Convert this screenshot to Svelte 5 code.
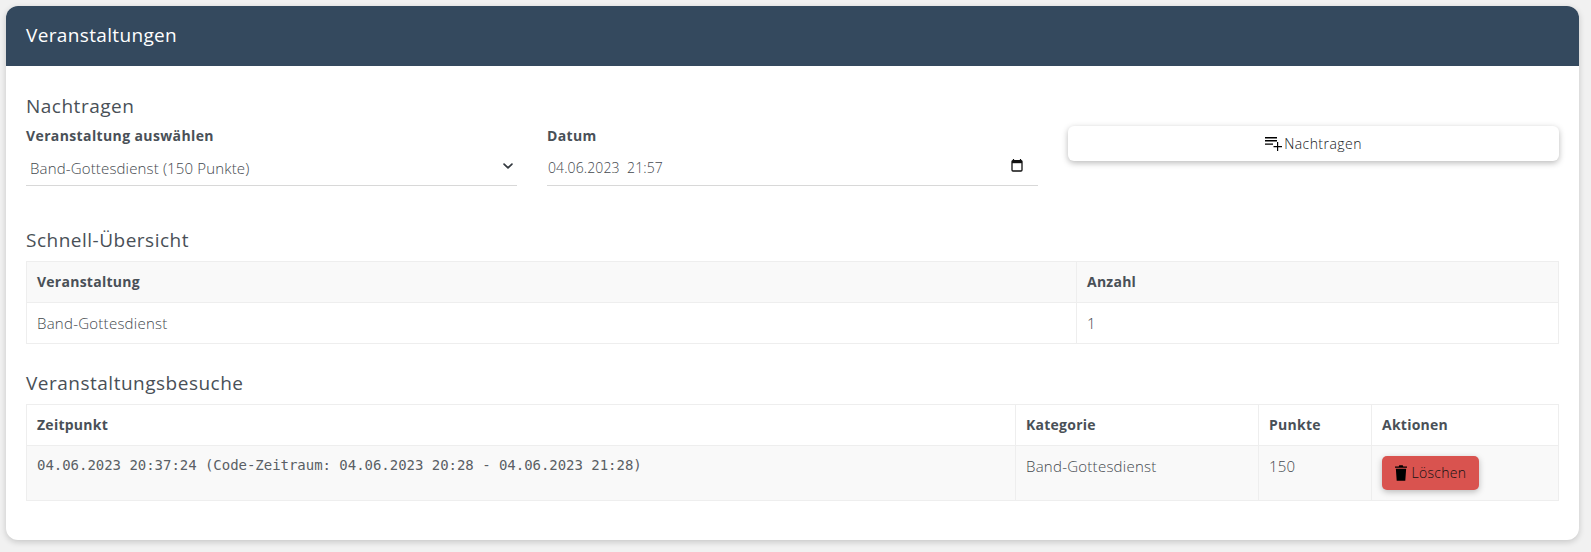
<script>
  const overview = [{ name: 'Band-Gottesdienst', count: 1 }];
  const visits = [{
    time: '04.06.2023 20:37:24 (Code-Zeitraum: 04.06.2023 20:28 - 04.06.2023 21:28)',
    category: 'Band-Gottesdienst',
    points: 150
  }];
</script>

<div class="page">
  <section class="card">
    <header class="head">Veranstaltungen</header>
    <div class="body">
      <h2 class="first">Nachtragen</h2>
      <div class="form">
        <div class="field">
          <label for="ev">Veranstaltung auswählen</label>
          <div class="control">
            <select id="ev"><option>Band-Gottesdienst (150 Punkte)</option></select>
            <svg class="chev" viewBox="0 0 16 16" aria-hidden="true"><path d="M3.5 5.8 8 10.2l4.5-4.4" fill="none" stroke="#343a40" stroke-width="2" stroke-linecap="round" stroke-linejoin="round"/></svg>
          </div>
        </div>
        <div class="field">
          <label for="dt">Datum</label>
          <div class="control">
            <input id="dt" type="text" value="04.06.2023  21:57" />
            <svg class="cal" viewBox="0 0 12 13" aria-hidden="true"><path d="M2.5 0v1.5M9.5 0v1.5" stroke="#111" stroke-width="1.2"/><rect x="1" y="1.6" width="10" height="10.4" rx="1" fill="none" stroke="#111" stroke-width="1.3"/><rect x="1" y="1.6" width="10" height="2.6" fill="#111"/></svg>
          </div>
        </div>
        <button class="add">
          <svg class="plus" viewBox="0 0 18 15" aria-hidden="true"><path d="M0 1h12v1.6H0zM0 4h12v1.6H0zM0 7.5h8v1.2H0zM12 6h1.2v4H17v1.2h-3.8V15H12v-3.8H8.5V10H12z" fill="#000"/></svg>
          <span>Nachtragen</span>
        </button>
      </div>

      <h2 class="second">Schnell-Übersicht</h2>
      <table class="t1">
        <colgroup><col class="c-ev" /><col /></colgroup>
        <thead><tr><th>Veranstaltung</th><th>Anzahl</th></tr></thead>
        <tbody>
          {#each overview as r}
            <tr><td>{r.name}</td><td>{r.count}</td></tr>
          {/each}
        </tbody>
      </table>

      <h2 class="third">Veranstaltungsbesuche</h2>
      <table class="t2">
        <colgroup><col class="c-time" /><col class="c-cat" /><col class="c-pts" /><col /></colgroup>
        <thead><tr><th>Zeitpunkt</th><th>Kategorie</th><th>Punkte</th><th>Aktionen</th></tr></thead>
        <tbody>
          {#each visits as v}
            <tr>
              <td><code>{v.time}</code></td>
              <td>{v.category}</td>
              <td>{v.points}</td>
              <td>
                <button class="del">
                  <svg class="trash" viewBox="0 0 14 18" aria-hidden="true"><path d="M5 0h4l.6 1.3H14V3H0V1.3h4.4zM1 4h12l-1 14H2z" fill="#000"/></svg>
                  <span>Löschen</span>
                </button>
              </td>
            </tr>
          {/each}
        </tbody>
      </table>
    </div>
  </section>
</div>

<style>
  :global(body) { margin: 0; background: #f1f1f1; }
  .page { padding: 6px 12px 11px 6px; font-family: "Open Sans", sans-serif; color: #43484e; font-weight: 300; font-size: 14px; letter-spacing: .25px; }
  .card { background: #fff; border-radius: 12px; overflow: hidden; box-shadow: 0 2px 6px rgba(0,0,0,.18); }
  .head { background: #34495e; color: #fff; height: 60px; display: flex; align-items: center; padding: 0 0 2px 20px; box-sizing: border-box; font-size: 19px; font-weight: 400; letter-spacing: .35px; }
  .body { padding: 29px 20px 39px; }
  h2 { margin: 0; font-size: 19px; line-height: 22px; font-weight: 400; color: #495057; letter-spacing: .5px; }
  .form { display: grid; grid-template-columns: repeat(3, 491px); gap: 30px; margin-top: 9px; }
  label { display: block; font-weight: 700; font-size: 14px; line-height: 20px; color: #495057; letter-spacing: .38px; }
  .control { position: relative; margin-top: 2px; height: 37px; border-bottom: 1px solid #d8d8d8; }
  select, input { width: 100%; height: 37px; border: 0; padding: 2px 4px 0; background: transparent; font: inherit; letter-spacing: inherit; color: inherit; appearance: none; outline: none; box-sizing: border-box; }
  select { font-size: 15px; letter-spacing: .15px; }
  input { padding: 2px 1px 0; letter-spacing: .1px; }
  .chev { position: absolute; right: 2px; top: 11px; width: 14px; height: 14px; }
  .cal { position: absolute; right: 15px; top: 11px; width: 12px; height: 13px; }
  .add { height: 35px; margin-top: 0; border: 0; border-radius: 6px; background: #fff; box-shadow: 0 2px 6px rgba(0,0,0,.28); display: flex; align-items: center; justify-content: center; gap: 1px; font: inherit; letter-spacing: .45px; color: #16191c; padding: 0; }
  .plus { width: 18px; height: 15px; }
  .second { margin-top: 43px; }
  .third { margin-top: 28px; }
  table { width: 1533px; border-collapse: collapse; table-layout: fixed; margin-top: 10px; }
  th, td { border: 1px solid #eee; padding: 10px; text-align: left; vertical-align: top; font-size: 15px; line-height: 20px; }
  th { font-weight: 700; font-size: 14px; color: #495057; letter-spacing: .25px; }
  .t1 th { background: #f9f9f9; }
  .t2 tbody tr { background: #f9f9f9; }
  .c-ev { width: 1050px; }
  .c-time { width: 989px; }
  .c-cat { width: 243px; }
  .c-pts { width: 113px; }
  code { display: block; font-family: "DejaVu Sans Mono", monospace; font-size: 14px; line-height: 18px; color: #5a5f65; font-weight: 400; letter-spacing: -.03px; }
  .del { height: 34px; width: 97px; margin: 0; border: 0; border-radius: 5px; background: #d9534f; box-shadow: 0 2px 6px rgba(0,0,0,.25); display: inline-flex; align-items: center; justify-content: center; gap: 5px; font: inherit; font-size: 14px; letter-spacing: .3px; color: #111; padding: 0; vertical-align: top; }
  .trash { width: 12px; height: 16px; }
</style>
